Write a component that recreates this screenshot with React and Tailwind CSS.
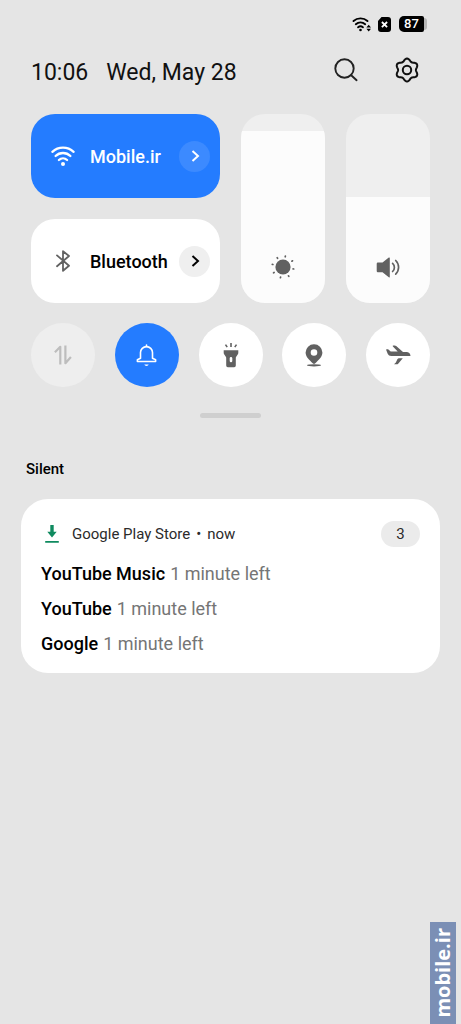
import { useState } from 'react';

// Six-lobed outline of the settings gear
const gearPath = Array.from({ length: 72 }, (_, i) => {
  const angle = (i * Math.PI) / 36;
  const radius = 10.2 + 1.3 * Math.cos(6 * angle);
  const x = 13 + radius * Math.sin(angle);
  const y = 13 - radius * Math.cos(angle);
  return `${i === 0 ? 'M' : 'L'}${x.toFixed(2)} ${y.toFixed(2)}`;
}).join(' ') + ' Z';

const WifiIcon = ({ className }) => (
  <svg className={className} viewBox="0 0 24 22" fill="none" stroke="currentColor" strokeWidth="2.3" strokeLinecap="round">
    <path d="M1.4 6.8a15.6 15.6 0 0 1 21.2 0" />
    <path d="M4.6 11a10.6 10.6 0 0 1 14.8 0" />
    <path d="M7.9 15a6 6 0 0 1 8.2 0" />
    <circle cx="12" cy="19" r="2" fill="currentColor" stroke="none" />
  </svg>
);

const BluetoothIcon = ({ className }) => (
  <svg className={className} viewBox="-5 0 24 22" fill="none" stroke="currentColor" strokeWidth="1.8" strokeLinejoin="round" strokeLinecap="round">
    <path d="M1 5.4 13 15.8 7 20.8V1.2l6 4.8L1 16.2" />
  </svg>
);

const SunIcon = () => (
  <svg className="w-6 h-6" viewBox="-12 -12 24 24" fill="currentColor" stroke="currentColor" strokeWidth="1.7" strokeLinecap="round">
    <circle r="7.6" stroke="none" />
    <path d="M2.2-10.2l.2-.7M8.9-5.8l.6-.4M10.1 1.9l.6.1M5.4 8.8l.4.5M-2.4 10.1l-.2.6M-8.9 5.5l-.6.4M-10.1-2.5l-.6-.1M-5.4-8.7l-.4-.6" />
  </svg>
);

const SpeakerIcon = () => (
  <svg className="w-6 h-6" viewBox="0 -2 24 24" fill="none" stroke="currentColor" strokeWidth="1.7" strokeLinecap="round">
    <path d="M1.9 5.6h4.6L12.8.6q1-.6 1 .5v18.6q0 1.1-1 .5l-6.3-4.9H1.9q-1.2 0-1.2-1.2V6.8q0-1.2 1.2-1.2Z" fill="currentColor" stroke="none" />
    <path d="M16.6 6.3a5.6 5.6 0 0 1 0 8.2M19.7 3.5a9.6 9.6 0 0 1 0 13.7" />
  </svg>
);

const DataIcon = () => (
  <svg className="w-[18px] h-5 text-[#bdbdbd]" viewBox="0 0 18 20" fill="none" stroke="currentColor" strokeWidth="2.2" strokeLinejoin="round">
    <path d="M6.3 19.4V1.8L.9 7.3M11.4.6v17.6l5.5-6.2" />
  </svg>
);

const BellIcon = () => (
  <svg className="w-[21px] h-[23px] text-white" viewBox="0 0 21 23" fill="none" stroke="currentColor" strokeWidth="1.6" strokeLinejoin="round" strokeLinecap="round">
    <path d="M1.4 17.5v-1.7l3.1-1.5V8.6a6 6 0 0 1 12 0v5.7l3.1 1.5v1.7Z" />
    <path d="M10.5 1v1.4" />
    <path d="M8.3 20.6h4.4q-.4 1.4-2.2 1.4t-2.2-1.4Z" fill="currentColor" stroke="none" />
  </svg>
);

const FlashlightIcon = () => (
  <svg className="w-4 h-[26px]" viewBox="0 0 16 26" fill="currentColor">
    <path fillRule="evenodd" d="M.7 8.2h14.6v2.6q0 1-.6 1.8l-1.5 2.1q-.4.6-.4 1.3v7.6q0 1.6-1.6 1.6H4.800q-1.6 0-1.6-1.6V16q0-.7-.4-1.3l-1.5-2.1q-.6-.8-.6-1.8ZM8 15a1.3 1.3 0 0 0-1.3 1.3v2.6a1.3 1.3 0 0 0 2.6 0v-2.6A1.3 1.3 0 0 0 8 15Z" />
    <path d="M8 1v4M2.500 2.600l1.700 2.500M13.500 2.600l-1.700 2.500" fill="none" stroke="currentColor" strokeWidth="1.6" />
  </svg>
);

const PinIcon = () => (
  <svg className="w-[18px] h-[23px]" viewBox="0 0 18 23" fill="currentColor">
    <path fillRule="evenodd" d="M9 .3a8.3 8.3 0 0 1 8.4 8.3c0 4.2-3.6 7.4-7.4 11q-1 .9-2 0C4.200 16 .6 12.800.6 8.600A8.300 8.300 0 0 1 9 .3Zm0 4.900a3.300 3.300 0 1 0 0 6.600 3.300 3.300 0 0 0 0-6.600Z" />
    <ellipse cx="9" cy="21.3" rx="7" ry="1.1" />
  </svg>
);

const PlaneIcon = () => (
  <svg className="w-[25px] h-5" viewBox="0 0 25 20" fill="currentColor">
    <path d="M.6 4.200h1.500L4.700 6.600h7L6.900 1.500Q6.200.5 7.400.5h1.200q.9 0 1.600.6L17 7h4q3.300.4 3.500 4.100H5.200q-2.600 0-3.400-2L.2 4.900Q0 4.200.6 4.200Z" />
    <path d="M12.600 13.200h4.200l-4.400 5.200q-.7.900-1.800.9H8q2-1.300 2.700-3.500.6-2.600 1.900-2.600Z" />
  </svg>
);

const ChevronIcon = () => (
  <svg className="w-3 h-3" viewBox="0 0 12 12" fill="none" stroke="currentColor" strokeWidth="2">
    <path d="M3.5.9 9 6l-5.5 5.1" />
  </svg>
);

const ConnectionTile = ({ icon, label, active, onToggle }) => (
  <div className={`col-span-2 h-[84px] rounded-3xl pl-5 pr-[10px] flex items-center ${active ? 'bg-[#247cff] text-white' : 'bg-white text-black'}`}>
    <button type="button" aria-pressed={active} onClick={onToggle} className="flex-1 h-full flex items-center gap-[15px] text-[18px] font-medium">
      {icon}
      {label}
    </button>
    <button
      type="button"
      aria-label={`${label} details`}
      className={`w-[31px] h-[31px] rounded-full flex items-center justify-center ${active ? 'bg-[#3c8aff]' : 'bg-[#efefef]'}`}
    >
      <ChevronIcon />
    </button>
  </div>
);

const LevelSlider = ({ label, icon, initial }) => {
  const [level, setLevel] = useState(initial);

  return (
    <label className="relative row-span-2 rounded-3xl overflow-hidden bg-[#efefef] text-[#616161] flex flex-col justify-end">
      <div className="bg-[#fcfcfc]" style={{ height: `${level}%` }} />
      <span className="absolute inset-x-0 bottom-6 flex justify-center">{icon}</span>
      <input
        type="range"
        aria-label={label}
        min="0"
        max="100"
        value={level}
        onChange={(e) => setLevel(Number(e.target.value))}
        className="absolute inset-0 w-full h-full opacity-0 [writing-mode:vertical-lr] [direction:rtl]"
      />
    </label>
  );
};

const quickToggles = [
  { id: 'data', label: 'Mobile data', icon: <DataIcon />, style: 'bg-[#eeeeee]' },
  { id: 'bell', label: 'Ringer', icon: <BellIcon />, style: 'bg-[#247cff]' },
  { id: 'flashlight', label: 'Flashlight', icon: <FlashlightIcon />, style: 'bg-white text-[#616161]' },
  { id: 'location', label: 'Location', icon: <PinIcon />, style: 'bg-white text-[#616161]' },
  { id: 'airplane', label: 'Airplane mode', icon: <PlaneIcon />, style: 'bg-white text-[#616161]' },
];

const downloads = [
  { app: 'YouTube Music', status: '1 minute left' },
  { app: 'YouTube', status: '1 minute left' },
  { app: 'Google', status: '1 minute left' },
];

export default function App() {
  const [wifi, setWifi] = useState(true);
  const [bluetooth, setBluetooth] = useState(false);

  return (
    <div className="relative min-h-screen bg-[#e5e5e5] text-black font-['Roboto',sans-serif]">
      {/* Status bar */}
      <div className="h-12 pr-[34px] flex items-center justify-end">
        <svg className="w-5 h-4" viewBox="0 0 20 16" fill="none" stroke="currentColor" strokeWidth="1.9" strokeLinecap="round">
          <path d="M1.500 5a10.600 10.600 0 0 1 14 0M3.800 8.200a7.200 7.200 0 0 1 9.400 0M6.100 11.300a3.800 3.800 0 0 1 4.800 0" />
          <circle cx="8.5" cy="14" r="1.3" fill="currentColor" stroke="none" />
          <path d="M14.400 11.400 16.700 8.800 19 11.400ZM14.400 12.800 16.700 15.400 19 12.800Z" fill="currentColor" stroke="none" />
        </svg>
        <svg className="w-[13px] h-[15px] ml-[6px]" viewBox="0 0 13 15">
          <path d="M3.500 0H10q3 0 3 3v9q0 3-3 3H3q-3 0-3-3V4Z" fill="currentColor" />
          <path d="m3.900 5 5.200 5.200m0-5.200-5.200 5.200" stroke="#fff" strokeWidth="1.8" />
        </svg>
        <div className="ml-2 flex items-center">
          <div className="w-[25px] h-4 rounded-l-[5px] rounded-r-xs bg-black text-white text-[13px] leading-4 font-medium text-center">87</div>
          <div className="w-[3px] h-3 rounded-r-full bg-[#b5b5b5]" />
        </div>
      </div>

      {/* Clock and shortcuts */}
      <header className="h-12 pt-0.5 pl-[31px] pr-[41px] flex items-center text-[23px] text-[#111]">
        <time>10:06</time>
        <span className="ml-[18px]">Wed, May 28</span>
        <div className="ml-auto flex items-center gap-9 pb-1.5">
          <button type="button" aria-label="Search">
            <svg className="w-6 h-6" viewBox="0 0 24 24" fill="none" stroke="#222" strokeWidth="1.9" strokeLinecap="round">
              <circle cx="10.5" cy="10.5" r="9.2" />
              <path d="m17.2 17.2 5.4 5" />
            </svg>
          </button>
          <button type="button" aria-label="Settings">
            <svg className="w-[26px] h-[26px]" viewBox="0 0 26 26" fill="none" stroke="#111" strokeWidth="2" strokeLinejoin="round">
              <path d={gearPath} />
              <circle cx="13" cy="13" r="4.2" />
            </svg>
          </button>
        </div>
      </header>

      {/* Quick settings */}
      <section className="mt-[18px] px-[31px]">
        <div className="grid grid-cols-4 gap-[21px]">
          <ConnectionTile icon={<WifiIcon className="w-6 h-[22px]" />} label="Mobile.ir" active={wifi} onToggle={() => setWifi(!wifi)} />
          <LevelSlider label="Brightness" icon={<SunIcon />} initial={91} />
          <LevelSlider label="Volume" icon={<SpeakerIcon />} initial={56} />
          <ConnectionTile
            icon={<BluetoothIcon className={`w-6 h-[22px] ${bluetooth ? 'text-white' : 'text-[#616161]'}`} />}
            label="Bluetooth"
            active={bluetooth}
            onToggle={() => setBluetooth(!bluetooth)}
          />
        </div>

        <div className="mt-5 flex justify-between">
          {quickToggles.map((toggle) => (
            <button key={toggle.id} type="button" aria-label={toggle.label} className={`w-16 h-16 rounded-full flex items-center justify-center ${toggle.style}`}>
              {toggle.icon}
            </button>
          ))}
        </div>

        <div className="mt-[26px] mx-auto w-[61px] h-[5px] rounded-full bg-[#cfcfcf]" />
      </section>

      {/* Notifications */}
      <section className="mt-[41px] px-[21px]">
        <h2 className="pl-[5px] text-[15px] leading-5 font-medium">Silent</h2>

        <article className="mt-5 rounded-[27px] bg-white px-5 pt-[22px] pb-3">
          <div className="h-[26px] flex items-center text-[15px] text-[#2b2b2b]">
            <svg className="w-[22px] h-5" viewBox="-3 0 22 20" fill="#0f8a5f">
              <path d="M6.300 1h3.400v6.700h3L8 13.600 3.300 7.700h3ZM1.200 17h13.600v1.800H1.200Z" />
            </svg>
            <div className="ml-[9px] flex gap-[6px]">
              <span>Google Play Store</span>
              <span>•</span>
              <span>now</span>
            </div>
            <span className="ml-auto w-[39px] h-[26px] rounded-full bg-[#ebebeb] flex items-center justify-center">3</span>
          </div>
          <ul className="mt-[9px]">
            {downloads.map((item) => (
              <li key={item.app} className="flex gap-[5px] text-[18px] leading-[35px] text-[#757575]">
                <span className="font-medium text-black">{item.app}</span>
                <span>{item.status}</span>
              </li>
            ))}
          </ul>
        </article>
      </section>

      {/* Site label */}
      <div className="absolute right-[5px] bottom-0 w-[26px] h-[102px] bg-[#7b8fb5] text-white flex items-center justify-center">
        <span className="[writing-mode:vertical-rl] rotate-180 font-['Open_Sans',sans-serif] font-bold text-[20px] leading-[26px]">mobile.ir</span>
      </div>
    </div>
  );
}
